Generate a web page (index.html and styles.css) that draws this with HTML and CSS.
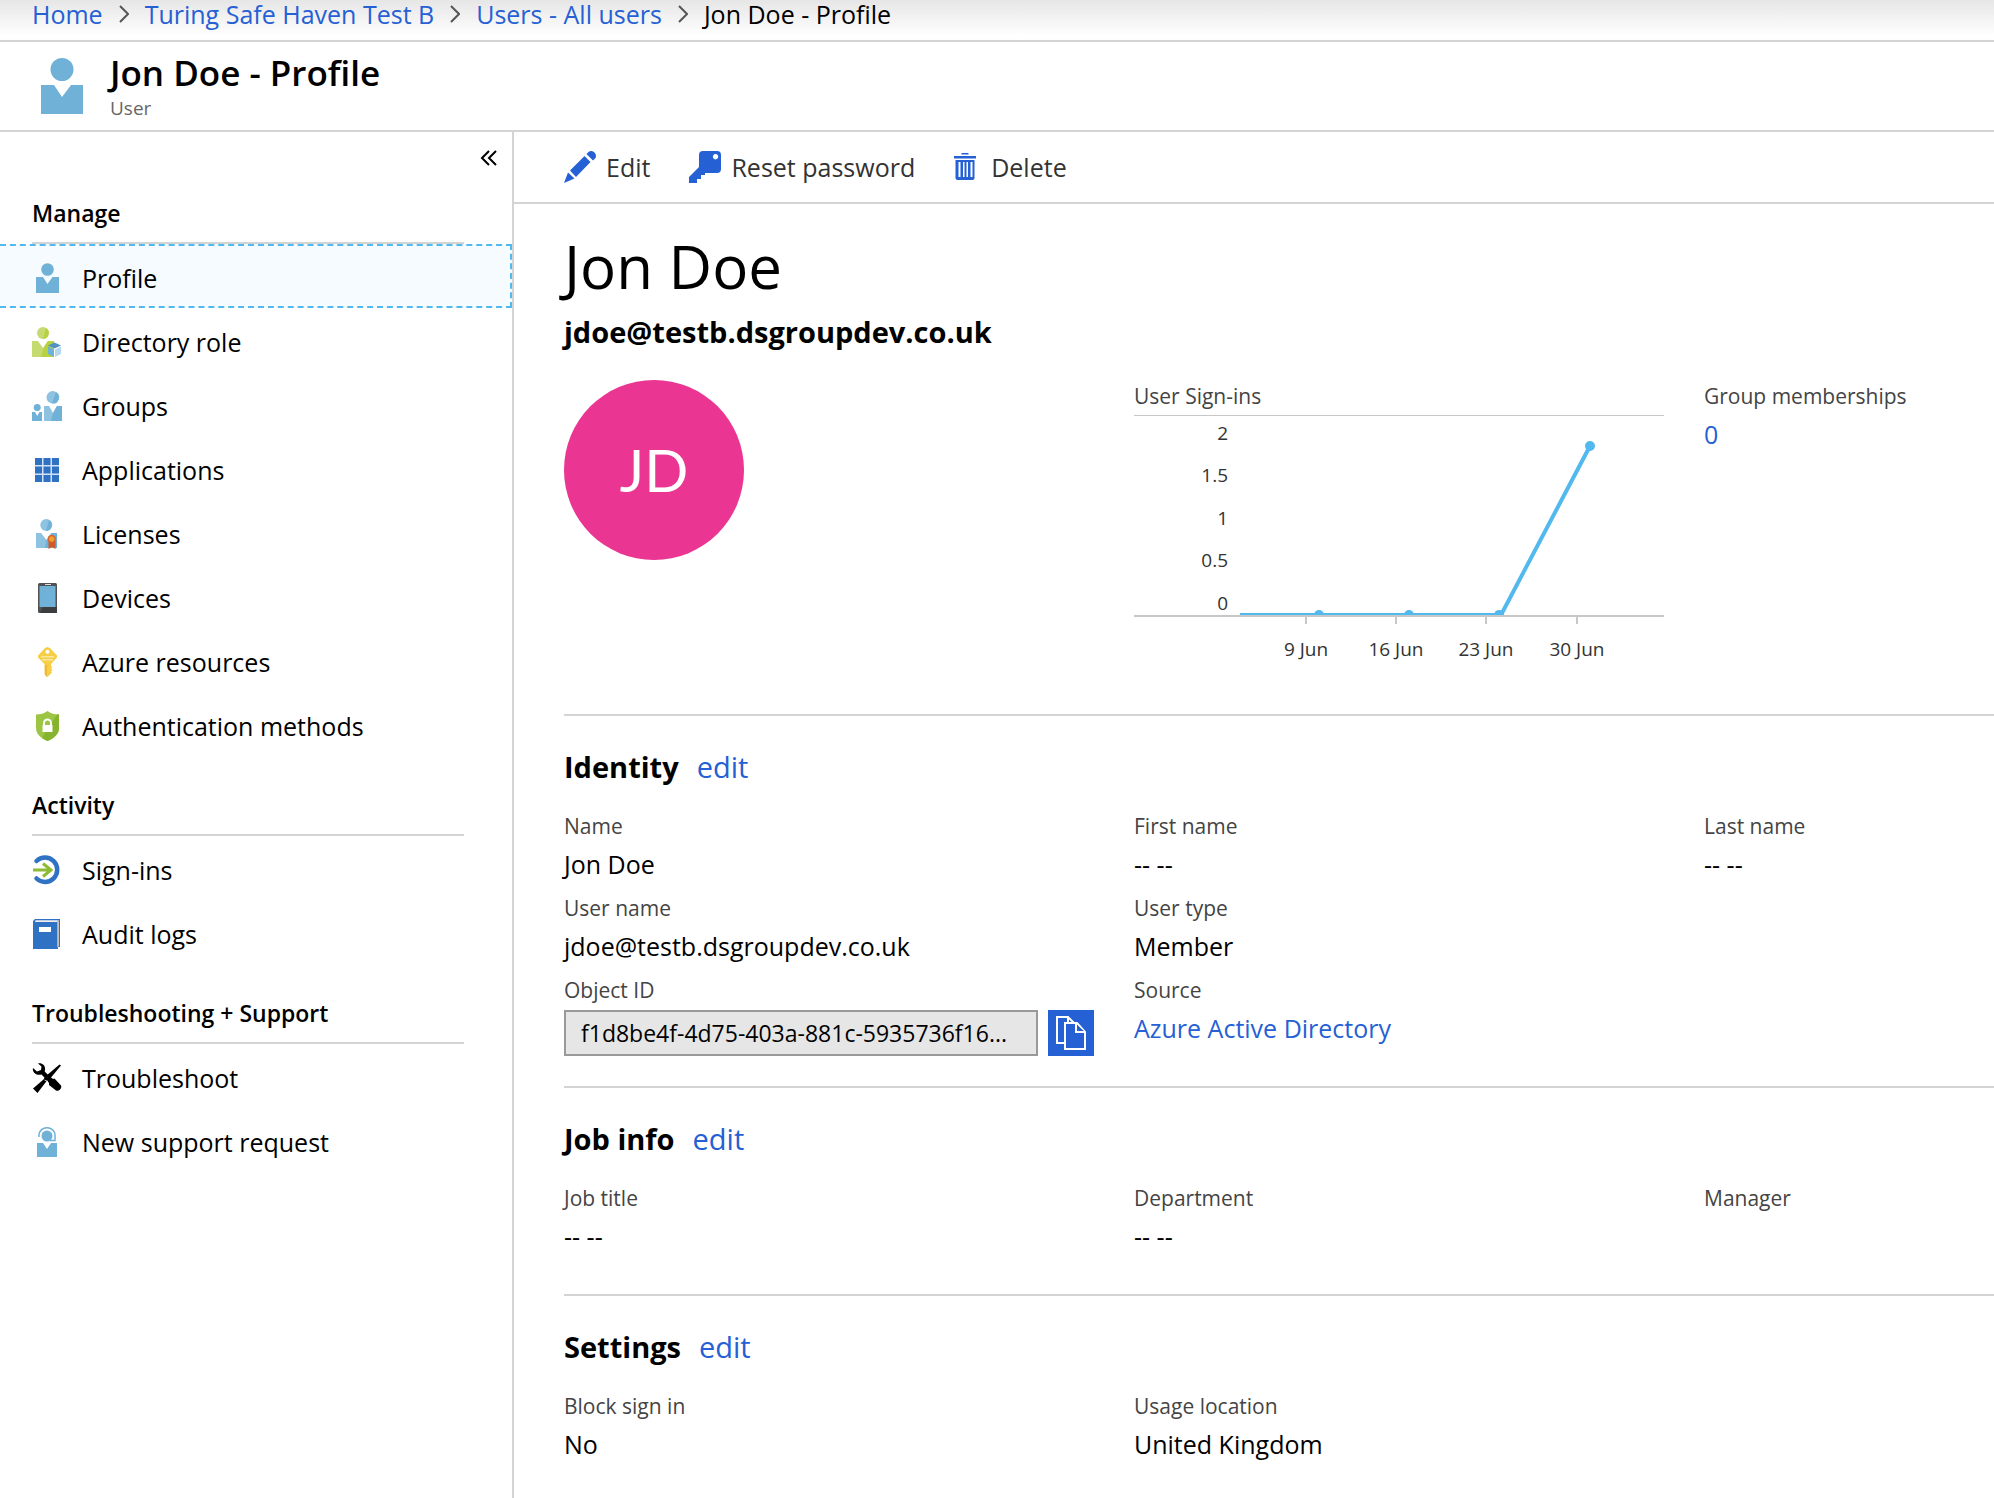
FILE: index.html
```html
<!DOCTYPE html>
<html lang="en">
<head>
<meta charset="utf-8">
<title>Jon Doe - Profile</title>
<link rel="stylesheet" href="styles.css">
</head>
<body>
<nav class="breadcrumb" aria-label="Breadcrumb">
  <a href="#">Home</a>
  <svg class="chevron" viewBox="0 0 10 18"><path d="M1 1l8 8-8 8"/></svg>
  <a href="#">Turing Safe Haven Test B</a>
  <svg class="chevron" viewBox="0 0 10 18"><path d="M1 1l8 8-8 8"/></svg>
  <a href="#">Users - All users</a>
  <svg class="chevron" viewBox="0 0 10 18"><path d="M1 1l8 8-8 8"/></svg>
  <span>Jon Doe - Profile</span>
</nav>

<header class="blade-header">
  <svg class="blade-icon" viewBox="0 0 42 56" fill="#6fb1d7"><circle cx="21" cy="11.500" r="11.500"/><path d="M0 27h13l8 12 9-12h12v29H0z"/></svg>
  <div>
    <h1 class="blade-title">Jon Doe - Profile</h1>
    <p class="blade-subtitle">User</p>
  </div>
</header>

<div class="layout">
  <aside class="sidebar">
    <div class="collapse-row">
      <button class="collapse" aria-label="Collapse menu"><svg viewBox="0 0 18 16"><path d="M9 1L2 8l7 7M16 1L9 8l7 7"/></svg></button>
    </div>
    <h2 class="menu-heading first">Manage</h2>
    <ul class="menu">
      <li><a class="item selected" href="#">
        <svg viewBox="0 0 30 30" fill="#6fb1d7"><circle cx="15.500" cy="6.500" r="6.300"/><path d="M4 14h7l4.500 7 5-7H27v16H4z"/></svg>Profile</a></li>
      <li><a class="item" href="#">
        <svg viewBox="0 0 30 30"><path fill="#c6da72" d="M0 14h6l5 7 5-7h6v16H0z"/><path fill="#b8d13e" d="M12 20l4-6h6v16H9z"/><circle cx="11" cy="6" r="6" fill="#c6da72"/><path fill="#b8d13e" d="M14 1a6 6 0 0 1-3 11z"/><path fill="#4f92c3" d="M22.500 15.500l6.500 3-6.500 3-6.500-3z"/><path fill="#6fb1d7" d="M16 19.500l6 3V30l-6-3z"/><path fill="#fff" d="M22 22h1v8h-1z"/><path fill="#b5d8ee" d="M29 19.500l-6 3V30l6-3z"/></svg>Directory role</a></li>
      <li><a class="item" href="#">
        <svg viewBox="0 0 30 30"><path fill="#8dc2e0" d="M12 15h5l4 7 4-7h5v15H12z"/><path fill="#6fb1d7" d="M21 22l4-7h5v15H19z"/><circle cx="20.700" cy="6.300" r="6.200" fill="#8dc2e0"/><path fill="#6fb1d7" d="M24 1a6.200 6.200 0 0 1-4 11.500z"/><circle cx="5.200" cy="16.500" r="3.500" fill="#6fb1d7"/><path fill="#6fb1d7" d="M0 21h3l2.200 4 2.300-4H10v9H0z"/></svg>Groups</a></li>
      <li><a class="item" href="#">
        <svg viewBox="0 0 30 30"><path fill="#d3e2f4" d="M3 3h24v24H3z"/><path fill="#2f72c4" d="M3 3h7v7H3zm8.500 0h7v7h-7zM20 3h7v7h-7zM3 11.500h7v7H3zm8.500 0h7v7h-7zm8.500 0h7v7h-7zM3 20h7v7H3zm8.500 0h7v7h-7zm8.500 0h7v7h-7z"/></svg>Applications</a></li>
      <li><a class="item" href="#">
        <svg viewBox="0 0 30 30"><path fill="#8dc2e0" d="M4 14h5l5.500 7 5-7H25v15H4z"/><path fill="#6fb1d7" d="M14.500 21l5-7H25v15H13z"/><circle cx="14.300" cy="6" r="6" fill="#8dc2e0"/><path fill="#6fb1d7" d="M17 1a6 6 0 0 1-3 11z"/><path fill="#cf5b26" d="M16.500 22h7v8l-3.500-2-3.500 2z"/><circle cx="19.700" cy="20" r="4" fill="#d5602a"/><circle cx="19.700" cy="20" r="2.700" fill="#efa02d"/></svg>Licenses</a></li>
      <li><a class="item" href="#">
        <svg viewBox="0 0 30 30"><rect x="6" width="19" height="30" rx="1.500" fill="#505254"/><path fill="#3b3d3f" d="M11 24h14v6H8z"/><path fill="#6fb1d7" d="M7.500 3h16v21h-16z"/><path fill="#ddd" d="M13 1h6v1h-6z"/></svg>Devices</a></li>
      <li><a class="item" href="#">
        <svg viewBox="0 0 30 30"><path fill="#f7cf46" d="M15.500 0L18 1l7 7.500v2L19 17v2l1.500 1-1.500 1.500 1.500 1.500-1.500 1.500 1 1-4.500 4.500-3-3V17L6 10.500v-2L13 1z"/><path fill="#efb83b" d="M13 18h2v12l-2-2z"/><circle cx="15.500" cy="4.800" r="2" fill="#fff"/><path fill="#fbe7a2" d="M9 9h13v1.500H9zm1 3h11v1.500H10z"/></svg>Azure resources</a></li>
      <li><a class="item" href="#">
        <svg viewBox="0 0 30 30"><path fill="#9cc544" d="M15.500 0c3 2.500 7 3.500 11.500 3.500V17c0 6-5 10.500-11.500 13C9 27.500 4 23 4 17V3.500C8.500 3.500 12.500 2.500 15.500 0z"/><path fill="#87b42e" d="M25 3.500h2V17c0 6-5 10.500-11.500 13-2-1-4-2-5.500-3.200z"/><path fill="none" stroke="#fff" stroke-width="2" d="M12 15v-3a3.500 3.500 0 0 1 7 0v3"/><path fill="#fff" d="M10.500 14h10v7h-10z"/></svg>Authentication methods</a></li>
    </ul>
    <h2 class="menu-heading">Activity</h2>
    <ul class="menu">
      <li><a class="item" href="#">
        <svg viewBox="0 0 30 30" fill="none"><path stroke="#2f72c4" stroke-width="4.500" stroke-linecap="round" d="M4.500 6A12.200 12.200 0 1 1 4.500 23.500"/><path stroke="#8dbb35" stroke-width="3" d="M1 15h18M11 8.500l8 6.500-8 6.500"/></svg>Sign-ins</a></li>
      <li><a class="item" href="#">
        <svg viewBox="0 0 30 30"><path fill="#2f72c4" d="M3 0h25v28h-2v2H1V2z"/><path fill="#f0eeec" d="M3.500 1.200H27L25 3H3z"/><path fill="#c5c0bd" d="M25.200 3L27 1.200V27l-1.800 1.500z"/><path fill="#fff" d="M7 8h12v5H7z"/></svg>Audit logs</a></li>
    </ul>
    <h2 class="menu-heading">Troubleshooting + Support</h2>
    <ul class="menu">
      <li><a class="item" href="#">
        <svg viewBox="0 0 30 30"><path d="M6 .5c4-1 7.500 2 7 6l-.3 2 3 3L27.500 1.500l1.500 1-10 12 2 1.500 1.500-.5 6.500 7c1.500 3-2.500 6.500-5 5L17 22v-2l-2-2.500L5.500 30 1 25.500l10.500-9 1-2-3-3C5 13 0 9.500 1 5l4 3.500 4-1.500.500-3.500z"/><path stroke="#fff" stroke-width=".8" d="M12.500 17l3.500 1.500"/></svg>Troubleshoot</a></li>
      <li><a class="item" href="#">
        <svg viewBox="0 0 30 30" fill="#6fb1d7"><circle cx="15" cy="9" r="5.500"/><path d="M5 16h6l4 6 4-6h6v14H5z"/><path fill="none" stroke="#6fb1d7" stroke-width="1.500" d="M7 10V8a8 7.300 0 0 1 16 0v5.500h-5"/></svg>New support request</a></li>
    </ul>
  </aside>

  <main class="content">
    <div class="toolbar">
      <button class="command"><svg class="wide-icon" viewBox="0 0 32 32" fill="#2560d4"><path d="M0 32l4-10.500 6.500 6zM6 19.500L20.500 5l6 6L12 26zM22.500 3l2-2c4-3 9 2 7 6l-2.500 2.500z"/></svg>Edit</button>
      <button class="command"><svg class="wide-icon" viewBox="0 0 32 32" fill="#2560d4"><path fill-rule="evenodd" d="M14 0h14q4 0 4 4v14q0 4-4 4H16v2h-4v4H8v4H0v-6l10-10V4q0-4 4-4zm12.500 3a2.700 2.700 0 1 0 .1 0z"/></svg>Reset password</button>
      <button class="command"><svg class="bin-icon" viewBox="0 0 22 32" fill="#2560d4"><path fill-rule="evenodd" d="M7.500 2h7v1.500h-7zM0 5h22v2.500H0zM1.500 9h19v18q0 2-2 2h-15q-2 0-2-2zM4.500 11v15h2V11zm4.500 0v15h1.500V11zm3.500 0v15H14V11zm4 0v15h2V11z"/></svg>Delete</button>
    </div>

    <div class="overview">
      <h2 class="user-name">Jon Doe</h2>
      <p class="user-mail">jdoe@testb.dsgroupdev.co.uk</p>
      <div class="columns">
        <div><div class="avatar">JD</div></div>
        <div class="signins">
          <h3 class="label chart-title">User Sign-ins</h3>
          <svg class="chart" viewBox="0 0 530 256" role="img" aria-label="User sign-ins">
            <g text-anchor="end">
              <text x="94" y="24">2</text><text x="94" y="66">1.5</text><text x="94" y="109">1</text><text x="94" y="151">0.5</text><text x="94" y="194">0</text>
            </g>
            <path class="axis-tick" d="M172 200v8M262 200v8M352 200v8M443 200v8"/>
            <g fill="#52b9ee"><circle cx="185" cy="199" r="5"/><circle cx="275" cy="199" r="5"/><circle cx="365" cy="199" r="5"/><circle cx="456" cy="30" r="5"/></g>
            <path class="series" d="M106 199h261L456 30"/>
            <path fill="#fff" d="M180 201h10v4h-10zM270 201h10v4h-10zM360 201h10v4h-10z"/>
            <path class="axis" d="M0 200h530"/>
            <g text-anchor="middle">
              <text x="172" y="240">9 Jun</text><text x="262" y="240">16 Jun</text><text x="352" y="240">23 Jun</text><text x="443" y="240">30 Jun</text>
            </g>
          </svg>
        </div>
        <dl class="field"><dt class="label">Group memberships</dt><dd class="value"><a href="#">0</a></dd></dl>
      </div>
    </div>

    <section class="section">
      <h3 class="section-title">Identity <a href="#">edit</a></h3>
      <div class="columns">
        <dl class="field"><dt class="label">Name</dt><dd class="value">Jon Doe</dd></dl>
        <dl class="field"><dt class="label">First name</dt><dd class="value">-- --</dd></dl>
        <dl class="field"><dt class="label">Last name</dt><dd class="value">-- --</dd></dl>
        <dl class="field"><dt class="label">User name</dt><dd class="value">jdoe@testb.dsgroupdev.co.uk</dd></dl>
        <dl class="field wide"><dt class="label">User type</dt><dd class="value">Member</dd></dl>
        <div class="field">
          <label class="label" for="object-id">Object ID</label>
          <div class="copy-row">
            <input id="object-id" class="copy-input" readonly value="f1d8be4f-4d75-403a-881c-5935736f16...">
            <button class="copy-button" aria-label="Copy"><svg viewBox="0 0 30 34"><path d="M9 27H1V1h11l6 6M12 1v6"/><path d="M9 7h12l8 9v17H9z"/><path d="M20 8v8h9"/></svg></button>
          </div>
        </div>
        <dl class="field wide"><dt class="label">Source</dt><dd class="value"><a href="#">Azure Active Directory</a></dd></dl>
      </div>
    </section>

    <section class="section">
      <h3 class="section-title">Job info <a href="#">edit</a></h3>
      <div class="columns">
        <dl class="field"><dt class="label">Job title</dt><dd class="value">-- --</dd></dl>
        <dl class="field"><dt class="label">Department</dt><dd class="value">-- --</dd></dl>
        <dl class="field"><dt class="label">Manager</dt></dl>
      </div>
    </section>

    <section class="section">
      <h3 class="section-title">Settings <a href="#">edit</a></h3>
      <div class="columns">
        <dl class="field"><dt class="label">Block sign in</dt><dd class="value">No</dd></dl>
        <dl class="field wide"><dt class="label">Usage location</dt><dd class="value">United Kingdom</dd></dl>
      </div>
    </section>
  </main>
</div>
</body>
</html>
```
FILE: styles.css
```css
* { box-sizing: border-box; }
body {
  margin: 0;
  min-height: 100vh;
  display: flex;
  flex-direction: column;
  background: #fff;
  color: #000;
  font: 25px/32px "Open Sans", "Noto Sans", sans-serif;
}
h1, h2, h3, p, ul, dl, dd { margin: 0; padding: 0; }
ul { list-style: none; }
a { color: #2560d4; text-decoration: none; }
button { font: inherit; border: 0; background: none; padding: 0; cursor: pointer; }
svg { display: block; flex: none; }

.breadcrumb {
  display: flex;
  align-items: center;
  gap: 16px;
  height: 42px;
  padding: 0 32px 12px;
  border-bottom: 2px solid #d4d4d4;
  background: linear-gradient(#e6e6e6, #fff 36px);
}
.chevron { width: 10px; height: 18px; fill: none; stroke: #555; stroke-width: 2; }

.blade-header {
  display: flex;
  align-items: center;
  gap: 27px;
  height: 90px;
  padding-left: 41px;
  border-bottom: 2px solid #d4d4d4;
}
.blade-icon { width: 42px; height: 56px; }
.blade-title { font-size: 35px; line-height: 44px; font-weight: 600; }
.blade-subtitle { font-size: 19px; line-height: 26px; color: #666; }

.layout { display: flex; flex: 1; }
.sidebar { flex: none; width: 514px; border-right: 2px solid #d4d4d4; }
.collapse-row { display: flex; justify-content: flex-end; height: 64px; padding: 18px 14px 0; }
.collapse { width: 18px; height: 16px; }
.collapse svg { width: 18px; height: 16px; fill: none; stroke: #000; stroke-width: 2; }
.menu-heading {
  height: 80px;
  margin: 0 48px 0 32px;
  padding-top: 33px;
  border-bottom: 2px solid #d4d4d4;
  font-size: 23px;
  font-weight: 600;
}
.menu-heading.first { height: 48px; padding-top: 1px; }
.item {
  display: flex;
  align-items: center;
  gap: 20px;
  height: 64px;
  padding: 4px 32px 0;
  color: #000;
}
.item svg { width: 30px; height: 30px; }
.item.selected { background: #f5fbfe; border: 2px dashed #52b9ee; border-left: 0; }

.content { flex: 1; min-width: 0; }
.toolbar {
  display: flex;
  align-items: center;
  height: 72px;
  gap: 39px;
  padding-left: 50px;
  border-bottom: 2px solid #d4d4d4;
}
.command { display: flex; align-items: center; gap: 10px; color: #333; }
.wide-icon { width: 32px; height: 32px; }
.bin-icon { width: 22px; height: 32px; margin-right: 5px; }

.overview { padding: 20px 0 42px 50px; }
.user-name { font-size: 60px; line-height: 84px; font-weight: 400; }
.user-mail { font-size: 29px; line-height: 40px; font-weight: 700; padding-top: 4px; }
.columns { display: grid; grid-template-columns: 57fr 57fr 29fr; }
.overview .columns { margin-top: 28px; }
.avatar {
  display: grid;
  place-items: center;
  width: 180px;
  height: 180px;
  border-radius: 50%;
  background: #ea3592;
  color: #fff;
  font-family: Lato, "Open Sans", sans-serif;
  font-size: 58px;
  font-weight: 400;
}
.label {
  display: block;
  font-size: 21px;
  line-height: 32px;
  font-weight: 400;
  color: #444;
}
.value { line-height: 44px; padding-bottom: 6px; white-space: nowrap; }
.wide { grid-column: 2 / 4; }
.signins { width: 530px; }
.chart-title { height: 36px; border-bottom: 1px solid #c8c8c8; }
.chart { width: 530px; height: 256px; font-size: 19px; fill: #333; }
.axis { stroke: #c8c8c8; stroke-width: 2; }
.axis-tick { stroke: #c8c8c8; stroke-width: 2; }
.series { fill: none; stroke: #52b9ee; stroke-width: 4; }

.section { margin: 0 0 0 50px; padding: 31px 0 30px; border-top: 2px solid #d4d4d4; }
.section-title {
  display: flex;
  gap: 18px;
  padding-bottom: 23px;
  font-size: 29px;
  line-height: 40px;
  font-weight: 700;
}
.section-title a { font-weight: 400; }
.copy-row { display: flex; gap: 10px; margin-top: 4px; padding-right: 40px; }
.copy-input {
  flex: 1;
  min-width: 0;
  height: 46px;
  padding: 0 15px;
  border: 2px solid #999;
  background: #e6e6e6;
  font: inherit;
  font-size: 23px;
  color: #000;
}
.copy-button { display: grid; place-items: center; width: 46px; height: 46px; background: #2560d4; }
.copy-button svg { width: 30px; height: 34px; fill: #2560d4; stroke: #fff; stroke-width: 2; }
```
